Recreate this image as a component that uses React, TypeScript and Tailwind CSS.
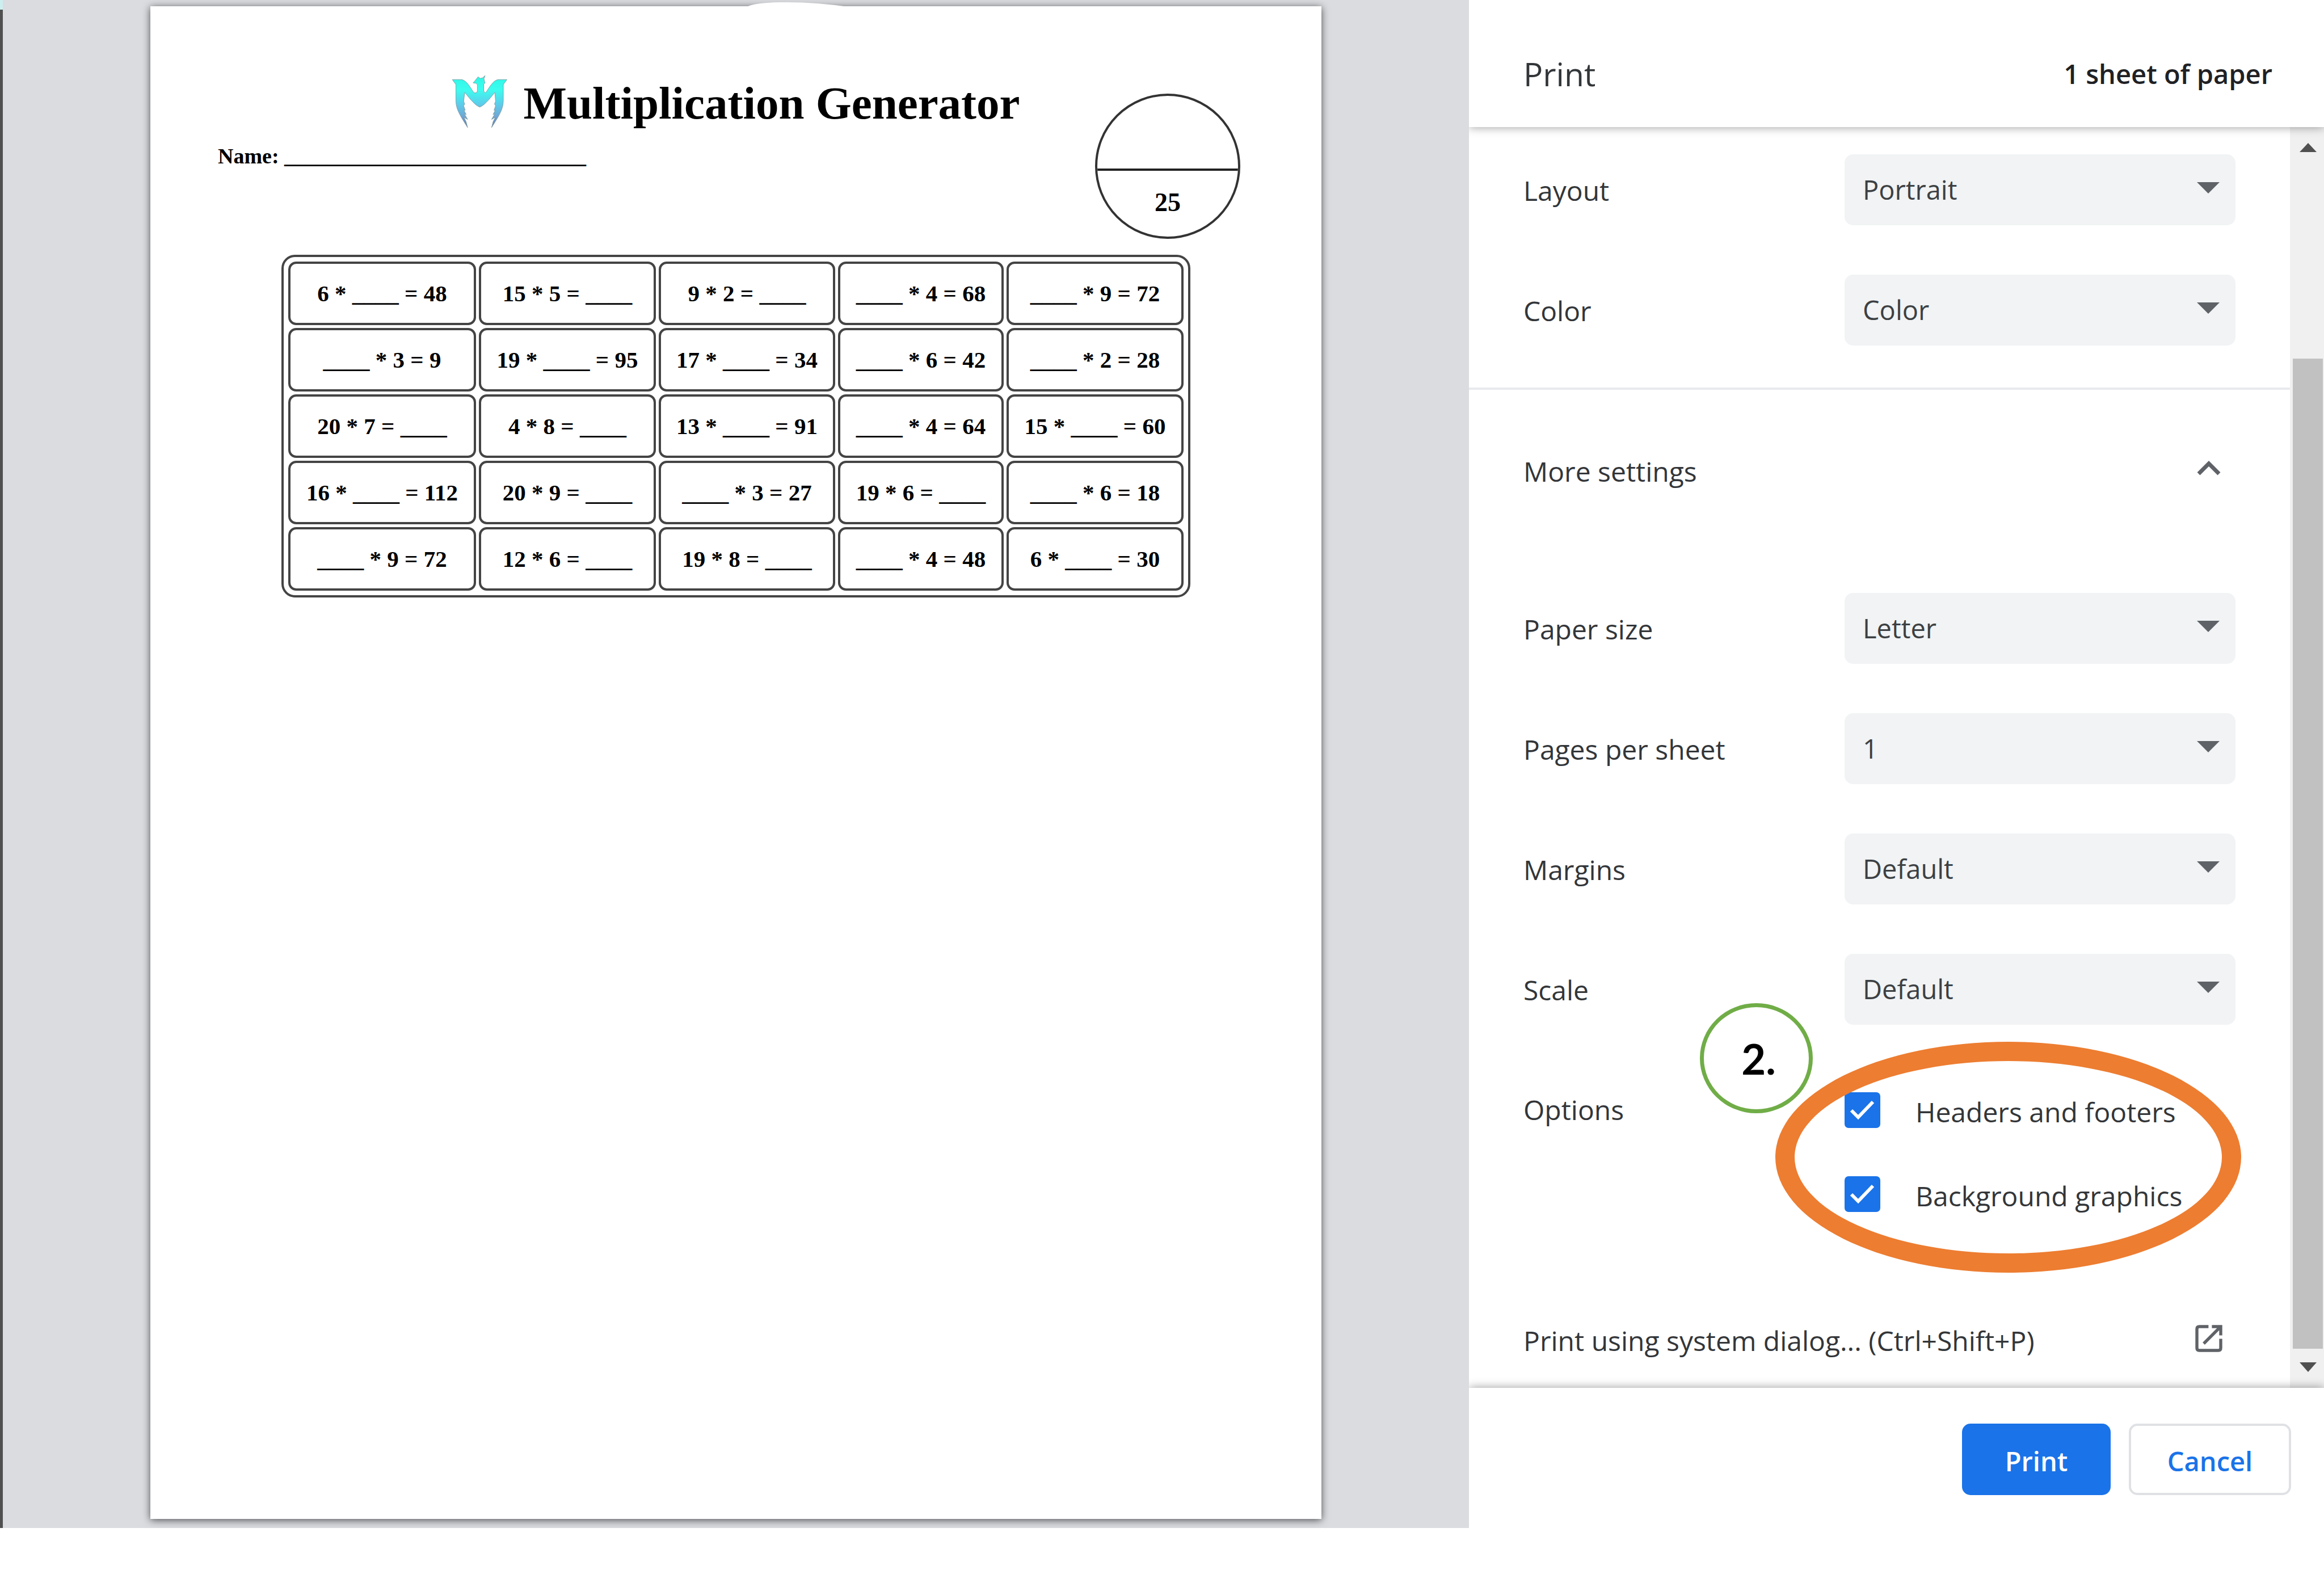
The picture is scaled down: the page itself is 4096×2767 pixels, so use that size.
import { useId } from "react";

const problems: string[][] = [
  ["6 * ____ = 48", "15 * 5 = ____", "9 * 2 = ____", "____ * 4 = 68", "____ * 9 = 72"],
  ["____ * 3 = 9", "19 * ____ = 95", "17 * ____ = 34", "____ * 6 = 42", "____ * 2 = 28"],
  ["20 * 7 = ____", "4 * 8 = ____", "13 * ____ = 91", "____ * 4 = 64", "15 * ____ = 60"],
  ["16 * ____ = 112", "20 * 9 = ____", "____ * 3 = 27", "19 * 6 = ____", "____ * 6 = 18"],
  ["____ * 9 = 72", "12 * 6 = ____", "19 * 8 = ____", "____ * 4 = 48", "6 * ____ = 30"],
];

function Logo() {
  return (
    <svg viewBox="48 46 324 310" className="h-[94px] w-[98px]" aria-hidden="true">
      <defs>
        <linearGradient id="wings" x1="0" y1="0" x2="0" y2="1">
          <stop offset="0" stopColor="#2bf8e6" />
          <stop offset="0.28" stopColor="#3dfcef" />
          <stop offset="0.55" stopColor="#5ccdeb" />
          <stop offset="0.78" stopColor="#6fa8d6" />
          <stop offset="1" stopColor="#6470ac" />
        </linearGradient>
      </defs>
      <path
        fill="url(#wings)"
        stroke="#7d9aa0"
        strokeWidth="3"
        strokeLinejoin="round"
        d="M52 73H108C138 80 160 125 178 150H190Q198 148 198 138V102L190 94L173 92L184 80L202 57L214 66L228 63L243 50L236 68L242 93L235 100V138Q237 150 246 150C265 125 288 76 320 73H370L349 102V200C348 250 318 292 281 352L290 318L303 292L281 305L300 272L289 277L303 250L295 252L304 226L298 215L304 200L300 148C285 163 245 222 212 233C179 222 139 163 124 148L118 200L124 215L118 226L127 252L119 250L133 277L122 272L141 305L119 292L132 318L141 352C104 292 74 250 73 200V102Z"
      />
    </svg>
  );
}

function Worksheet() {
  return (
    <article className="relative min-w-0 flex-1 bg-white px-[119px] pt-[121px] font-['Liberation_Serif',serif] text-[41px] font-bold text-black shadow-[0_2px_13px_rgba(0,0,0,0.65)]">
      <svg viewBox="0 0 188 10" className="absolute -top-2 left-[1050px] h-[10px] w-[188px]" aria-hidden="true">
        <path d="M0 10Q10 2 60 1Q120 0 188 10Z" fill="#fff" />
      </svg>
      <header className="grid grid-cols-[1fr_auto_1fr] grid-rows-[96px_auto] gap-y-[21px]">
        <div className="col-start-2 flex items-start gap-7">
          <Logo />
          <h1 className="pt-0.5 text-[81px] leading-[96px] whitespace-nowrap">Multiplication Generator</h1>
        </div>
        <p className="col-span-2 row-start-2 text-[38px] leading-[52px] whitespace-nowrap">
          Name: ____________________________
        </p>
        <div className="col-start-3 row-span-2 row-start-1 mt-[33px] mr-6 flex size-64 flex-col justify-self-end overflow-hidden rounded-full border-4 border-[#333] text-center text-[46px]">
          <div className="h-[132px] border-b-4 border-[#222]" />
          <div className="pt-7 leading-[56px]">25</div>
        </div>
      </header>
      <table className="mx-auto mt-7 border-separate border-spacing-[5px] rounded-[24px] border-4 border-[#444] p-[3px] text-center">
        <colgroup>
          <col className="w-[331px]" />
          <col className="w-[312px]" />
          <col className="w-[311px]" />
          <col className="w-[292px]" />
          <col className="w-[312px]" />
        </colgroup>
        <tbody>
          {problems.map((row, r) => (
            <tr key={r}>
              {row.map((problem, c) => (
                <td key={c} className="h-28 rounded-[14px] border-4 border-[#444] p-0 leading-[48px] whitespace-nowrap">
                  {problem}
                </td>
              ))}
            </tr>
          ))}
        </tbody>
      </table>
    </article>
  );
}

function SelectRow({ label, value }: { label: string; value: string }) {
  const id = useId();
  return (
    <div className="flex h-[212px] items-center justify-between pr-24 pl-24">
      <label htmlFor={id} className="pt-1">
        {label}
      </label>
      <div className="relative w-[689px]">
        <select
          id={id}
          defaultValue={value}
          className="h-[125px] w-full appearance-none rounded-[15px] bg-[#f1f3f4] pr-24 pl-8 text-[47px] text-[#3c4043]"
        >
          <option>{value}</option>
        </select>
        <svg viewBox="0 0 40 20" className="pointer-events-none absolute top-[49px] right-7 h-5 w-10" aria-hidden="true">
          <path d="M0 0H40L20 20Z" fill="#5f6368" />
        </svg>
      </div>
    </div>
  );
}

function CheckRow({ label }: { label: string }) {
  return (
    <label className="flex h-[148px] items-center gap-[62px]">
      <span className="relative size-[63px]">
        <input type="checkbox" defaultChecked className="block size-full appearance-none rounded-[7px] bg-[#1a73e8]" />
        <svg viewBox="0 0 63 63" className="pointer-events-none absolute inset-0" aria-hidden="true">
          <path d="M12 32L24 44L50 17" fill="none" stroke="#fff" strokeWidth="6" />
        </svg>
      </span>
      <span className="pt-2 whitespace-nowrap">{label}</span>
    </label>
  );
}

function Scrollbar() {
  return (
    <div className="flex w-[60px] shrink-0 flex-col items-center bg-[#f0f0f0] pl-[3px]" aria-hidden="true">
      <svg viewBox="0 0 30 16" className="mt-7 h-4 w-[30px]">
        <path d="M0 16H30L15 0Z" fill="#505050" />
      </svg>
      <div className="mt-[364px] w-[53px] flex-1 bg-[#c1c1c1]" />
      <svg viewBox="0 0 30 17" className="mt-6 mb-7 h-[17px] w-[30px]">
        <path d="M0 0H30L15 17Z" fill="#505050" />
      </svg>
    </div>
  );
}

export default function App() {
  return (
    <div className="flex min-h-screen bg-white font-['Open_Sans','Noto_Sans',sans-serif] text-[48px] text-[#333639]">
      <main className="mb-[74px] flex min-w-0 flex-1 bg-[#dadce0]">
        <div className="flex w-[5px] flex-col bg-[#cdeeee] pt-[17px]">
          <div className="flex-1 bg-[#505050]" />
        </div>
        <div className="flex min-w-0 flex-1 overflow-hidden px-[260px] pt-[11px] pb-4">
          <Worksheet />
        </div>
      </main>

      <aside className="flex w-[1507px] shrink-0 flex-col overflow-hidden">
        <header className="relative z-10 flex h-56 items-center justify-between bg-white pt-10 pr-[91px] pb-1 pl-24 shadow-[0_0_16px_rgba(0,0,0,0.4)]">
          <h2 className="text-[57px] leading-[64px]">Print</h2>
          <span className="text-[47px] font-semibold text-[#202124]">1 sheet of paper</span>
        </header>

        <div className="flex flex-1">
          <div className="flex min-w-0 flex-1 flex-col pt-1">
            <SelectRow label="Layout" value="Portrait" />
            <SelectRow label="Color" value="Color" />
            <hr className="mt-[31px] border-t-4 border-[#e8eaed]" />
            <button type="button" className="mb-[26px] flex h-72 items-center justify-between pr-[119px] pl-24">
              <span>More settings</span>
              <svg viewBox="0 0 48 48" className="mb-3 size-12" aria-hidden="true">
                <path d="M6 34L24 16L42 34" fill="none" stroke="#5f6368" strokeWidth="7" />
              </svg>
            </button>
            <SelectRow label="Paper size" value="Letter" />
            <SelectRow label="Pages per sheet" value="1" />
            <SelectRow label="Margins" value="Default" />
            <SelectRow label="Scale" value="Default" />

            <div className="relative mt-[33px] flex justify-between pr-24 pl-24">
              <span className="leading-[148px]">Options</span>
              <div className="w-[689px]">
                <CheckRow label="Headers and footers" />
                <CheckRow label="Background graphics" />
              </div>
              <div className="pointer-events-none absolute -top-[46px] right-[86px] h-[407px] w-[821px] rounded-[50%] border-[34px] border-[#ed7d31]" />
              <div className="pointer-events-none absolute -top-[114px] right-[841px] flex h-[194px] w-[199px] items-center justify-center rounded-[50%] border-[7px] border-[#70ad47] pl-2 font-['Lato',sans-serif] text-[74px] font-bold text-black">
                2.
              </div>
            </div>

            <button type="button" className="mt-[119px] mb-[21px] flex h-32 items-center justify-between pr-[119px] pl-24">
              <span className="pt-1 whitespace-nowrap">Print using system dialog... (Ctrl+Shift+P)</span>
              <svg viewBox="0 0 160 160" className="mb-1 size-12" aria-hidden="true">
                <path
                  d="M78 10H24Q10 10 10 24V136Q10 150 24 150H136Q150 150 150 136V82M98 10H150V62M50 110L146 14"
                  fill="none"
                  stroke="#5f6368"
                  strokeWidth="18"
                />
              </svg>
            </button>
          </div>
          <Scrollbar />
        </div>

        <footer className="relative z-10 flex h-[321px] items-start justify-end gap-8 bg-white pt-[63px] pr-[58px] text-[47px] font-semibold shadow-[0_0_16px_rgba(0,0,0,0.4)]">
          <button type="button" className="h-[126px] w-[262px] rounded-[15px] bg-[#1a73e8] pt-1.5 text-white">
            Print
          </button>
          <button type="button" className="h-[126px] w-[286px] rounded-[15px] border-4 border-[#dfe1e5] pt-1.5 text-[#1a73e8]">
            Cancel
          </button>
        </footer>
      </aside>
    </div>
  );
}
